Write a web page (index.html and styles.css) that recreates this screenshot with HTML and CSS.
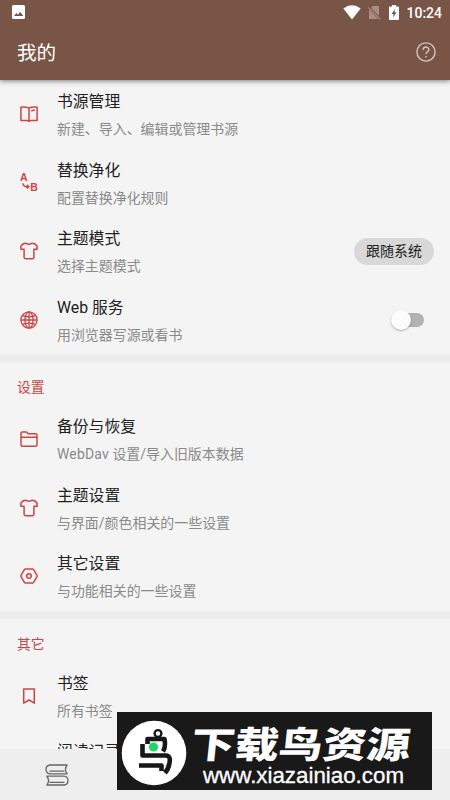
FILE: index.html
```html
<!DOCTYPE html>
<html lang="zh-CN">
<head>
<meta charset="utf-8">
<title>我的</title>
<link rel="stylesheet" href="styles.css">
</head>
<body>
<svg class="defs" width="0" height="0">
  <symbol id="shirt" viewBox="0 0 18 18"><path d="M5.8 1.2Q9 3.5 12.2 1.2Q15.4 1.2 17.1 4.2V7.2H13.9V15.3Q13.9 16.7 12.5 16.7H5.5Q4.1 16.7 4.1 15.3V7.2H.9V4.2Q2.6 1.2 5.8 1.2Z"/></symbol>
</svg>
<div class="app">
  <header class="top">
    <div class="status">
      <svg class="photo" width="13" height="14" viewBox="0 0 13 14"><rect width="13" height="14" rx="1.5" fill="#fff"/><path d="M2 11L4.3 8L6 9.7L8.2 6.8L11.3 11Z" fill="#795548"/></svg>
      <div class="status-right">
        <svg width="18" height="15" viewBox="0 0 18 15"><path d="M.3 3.5Q9-3 17.7 3.5L9 14.5Z" fill="#fff"/></svg>
        <svg class="sim" width="13" height="15" viewBox="0 0 13 15"><path d="M4.5 1H11V11L3.2 3ZM1 4.8L10 14H1Z" fill="#a98d83"/><path d="M.3 2.5L12.2 14.5" stroke="#a98d83" stroke-width="1.2"/></svg>
        <svg class="battery" width="10" height="15" viewBox="0 0 10 15"><path d="M3 0H7V1.5H9Q10 1.5 10 2.5V14Q10 15 9 15H1Q0 15 0 14V2.5Q0 1.5 1 1.5H3Z" fill="#fff"/><path d="M6.2 3.8L2.5 9H4.5L4 12.5L7.6 7.3H5.5Z" fill="#795548"/></svg>
        <span class="time">10:24</span>
      </div>
    </div>
    <div class="bar">
      <h1>我的</h1>
      <svg width="20" height="20" viewBox="0 0 20 20" fill="none" stroke="#d8c6bf" stroke-width="1.4"><circle cx="10" cy="10" r="9.1"/><path d="M7.2 7.8C7.2 4.1 12.8 4.1 12.8 7.7C12.8 9.7 10 9.8 10 12.2"/><path d="M10 14V15.5"/></svg>
    </div>
  </header>

  <main class="list">
    <section class="group">
      <div class="row">
        <svg class="icon" viewBox="0 0 18 18"><path d="M9 3.2Q5.5 1.5 .9 2.2V15.6H7.3L9 16.4L10.7 15.6H17.1V2.2Q12.5 1.5 9 3.2V16.2M11.2 5.8L14.8 5.1"/></svg>
        <div class="text"><div class="name">书源管理</div><div class="desc">新建、导入、编辑或管理书源</div></div>
      </div>
      <div class="row">
        <svg class="icon letters" viewBox="0 0 18 18"><text x="0" y="7">A</text><text x="10.2" y="17">B</text><path d="M2.8 9.3Q3.3 13 8.3 12.8M6.7 10.8L9 12.8L6.7 14.3"/></svg>
        <div class="text"><div class="name">替换净化</div><div class="desc">配置替换净化规则</div></div>
      </div>
      <div class="row">
        <svg class="icon"><use href="#shirt"/></svg>
        <div class="text"><div class="name">主题模式</div><div class="desc">选择主题模式</div></div>
        <span class="chip">跟随系统</span>
      </div>
      <div class="row">
        <svg class="icon globe" viewBox="0 0 18 18"><circle cx="9" cy="9" r="8.1"/><ellipse cx="9" cy="9" rx="4.1" ry="8.1"/><path d="M9 1V17M1 9H17M2.5 4.7Q9 7 15.5 4.7M2.5 13.3Q9 11 15.5 13.3"/></svg>
        <div class="text"><div class="name">Web 服务</div><div class="desc">用浏览器写源或看书</div></div>
        <span class="switch"></span>
      </div>
    </section>
    <section class="group">
      <h2>设置</h2>
      <div class="row">
        <svg class="icon" viewBox="0 0 18 18"><path d="M1 14.7V3.2Q1 1.9 2.3 1.9H6.3L8.2 3.8H15.6Q17 3.8 17 5.2V14.7Q17 16.2 15.6 16.2H2.4Q1 16.2 1 14.7ZM1 7.2H17"/></svg>
        <div class="text"><div class="name">备份与恢复</div><div class="desc"><span class="latin">WebDav</span> 设置/导入旧版本数据</div></div>
      </div>
      <div class="row">
        <svg class="icon"><use href="#shirt"/></svg>
        <div class="text"><div class="name">主题设置</div><div class="desc">与界面/颜色相关的一些设置</div></div>
      </div>
      <div class="row">
        <svg class="icon" viewBox="0 0 18 18"><path d="M5.5 1.9H12.5Q13.2 1.9 13.6 2.6L17 8.3Q17.3 9 17 9.7L13.6 15.4Q13.2 16.1 12.5 16.1H5.5Q4.8 16.1 4.4 15.4L1 9.7Q.7 9 1 8.3L4.4 2.6Q4.8 1.9 5.5 1.9Z"/><circle cx="9" cy="9" r="2.3"/></svg>
        <div class="text"><div class="name">其它设置</div><div class="desc">与功能相关的一些设置</div></div>
      </div>
    </section>
    <section class="group">
      <h2>其它</h2>
      <div class="row">
        <svg class="icon" viewBox="0 0 18 18"><path d="M3.7 1.9H14.3V16.2L9 13L3.7 16.2Z"/></svg>
        <div class="text"><div class="name">书签</div><div class="desc">所有书签</div></div>
      </div>
      <div class="row">
        <span class="icon"></span>
        <div class="text"><div class="name">阅读记录</div></div>
      </div>
    </section>
  </main>

  <nav class="tabs">
    <svg width="24" height="22" viewBox="0 0 24 22" fill="none" stroke="#666" stroke-width="1.3"><path d="M22.5 1H5Q1 1.5 1 5.2Q1 9.4 5 9.8H22.5M22.3 1Q18.5 5.4 22.3 9.8M4.5 7.2H19.5M1.5 12.2H19Q23 12.6 23 16.4Q23 20.5 19 21H1.5M1.7 12.2Q5.5 16.5 1.7 21M4.5 18.3H19.5"/></svg>
  </nav>

  <aside class="watermark">
    <svg class="bird" width="66" height="66" viewBox="0 0 66 66"><circle cx="33" cy="33" r="32.3" fill="#fff"/><g fill="none" stroke="#171717" stroke-width="4.6" stroke-linejoin="round"><circle cx="37" cy="13.5" r="3.4" stroke-width="2.4"/><path d="M26.5 24V19H43.5Q45 27 42 31.5M21.5 24V35.5H45Q50 36 48.5 43Q47.5 49 44 53M18 45.5H40.5V51"/></g><circle cx="32.5" cy="27" r="4.6" fill="#20d767"/></svg>
    <svg class="brand" width="240" height="78" viewBox="0 0 240 78">
      <text class="brand-name" x="0" y="0" textLength="219" lengthAdjust="spacingAndGlyphs" transform="translate(3 46) skewX(-6) scale(1 .87)">下载鸟资源</text>
      <text class="site" x="16" y="70.5" textLength="201" lengthAdjust="spacingAndGlyphs">www.xiazainiao.com</text>
    </svg>
  </aside>
</div>
</body>
</html>
```

FILE: styles.css
```css
* { box-sizing: border-box; }
body { margin: 0; font-family: Roboto, "Noto Sans CJK SC", sans-serif; background: #f4f4f4; color: #212121; }
.defs { position: absolute; }
.app { position: relative; width: 450px; height: 800px; display: flex; flex-direction: column; overflow: hidden; }
svg { flex: none; }

.top { flex: none; height: 80px; background: #795548; color: #fff; box-shadow: 0 1px 5px rgba(0,0,0,.5); z-index: 1; }
.status { height: 24px; padding: 0 8px 0 12px; display: flex; align-items: center; justify-content: space-between; }
.status-right { display: flex; align-items: center; }
.sim { margin-left: 7px; }
.battery { margin-left: 8px; }
.time { margin-left: 7px; padding-top: 1px; font-size: 14px; line-height: 24px; font-weight: 500; }
.bar { height: 56px; padding: 0 14px 0 17px; display: flex; align-items: center; justify-content: space-between; }
h1 { margin: 0; padding-top: 3px; font-size: 19.6px; line-height: 28px; font-weight: 400; }

.list { flex: 1; min-height: 0; overflow: hidden; }
.group + .group { border-top: 8px solid #ececec; }
h2 { margin: 0; height: 43px; padding: 15px 17px 0; font-size: 13.8px; line-height: 20px; font-weight: 400; color: #cb4644; }
.row { height: 68.5px; padding: 0 16px 0 19.5px; display: flex; align-items: center; }
.icon { width: 18px; height: 18px; flex: none; overflow: visible; fill: none; stroke: #cb4644; stroke-width: 1.5; stroke-linejoin: round; }
.letters text { font: bold 10.5px "Liberation Sans", sans-serif; fill: #cb4644; stroke: none; }
.globe { stroke-width: 1.3; }
.text { flex: 1; align-self: flex-start; margin-left: 19.5px; padding-top: 8px; }
.name { font-size: 15.8px; line-height: 27px; }
.desc { font-size: 13.95px; line-height: 28px; color: #8a8a8a; }
.latin { letter-spacing: .2px; }
.chip { width: 80px; height: 27px; border-radius: 14px; background: #d8d8d8; text-align: center; font-size: 14px; line-height: 27px; }
.switch { position: relative; width: 27px; height: 14px; margin-right: 10px; border-radius: 7px; background: #b2b2b2; }
.switch::before { content: ""; position: absolute; left: -6px; top: -3px; width: 20px; height: 20px; border-radius: 50%; background: #fcfcfc; box-shadow: 0 1px 2px rgba(0,0,0,.3); }

.tabs { flex: none; height: 51px; background: #eee; padding: 0 45px; display: flex; align-items: center; }

.watermark { position: absolute; left: 117px; top: 712px; width: 315px; height: 78px; background: #191919; display: flex; align-items: center; padding-left: 4px; overflow: hidden; }
.bird { margin-top: 3px; }
.brand-name { font: 900 42px "Noto Sans CJK SC", sans-serif; fill: #fff; }
.site { font: 21.5px "Liberation Sans", sans-serif; fill: #fff; stroke: #fff; stroke-width: .3; }
```
